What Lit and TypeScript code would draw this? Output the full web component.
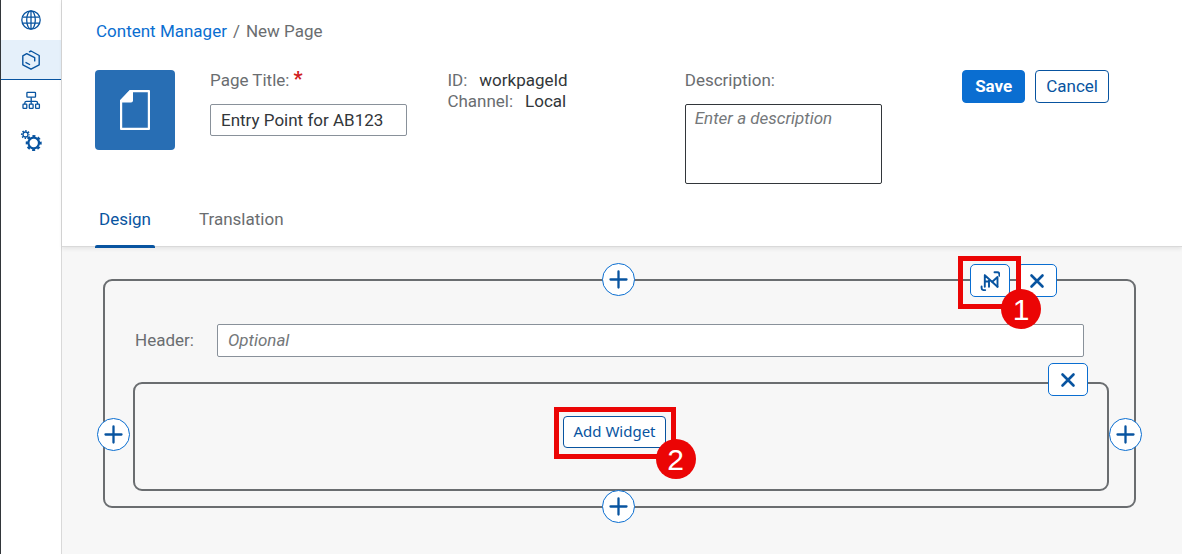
import { LitElement, html, css, svg } from "lit";
import { customElement, state } from "lit/decorators.js";

const globe = svg`<svg width="20" height="20" viewBox="0 0 20 20" fill="none" stroke="currentColor" stroke-width="1.3" aria-hidden="true">
  <circle cx="10" cy="10" r="9.2"/><ellipse cx="10" cy="10" rx="4.3" ry="9.2"/><path d="M10 1v18M2 7.2h16M2 13.2h16"/></svg>`;
const box = svg`<svg width="20" height="20" viewBox="0 0 20 20" fill="none" stroke="currentColor" stroke-width="1.4" stroke-linecap="round" stroke-linejoin="round" aria-hidden="true">
  <path d="M8.4 1.8 10 1l8.200 4.500v9.300L10 19.200l-8.200-4.400V5.800l3.900-2.200 8 4v3.300M5 12.600l3.600 1.900"/></svg>`;
const tree = svg`<svg width="20" height="20" viewBox="0 0 20 20" fill="none" stroke="currentColor" stroke-width="1.3" aria-hidden="true">
  <rect x="5.9" y="2.4" width="8.6" height="4.8" rx=".6"/><path d="M10.2 7.2v7M3.8 14.2V13q0-1.700 1.700-1.700h9.400q1.700 0 1.700 1.700v1.200"/>
  <rect x="2" y="14.200" width="3.8" height="4.2" rx=".6"/><rect x="8.3" y="14.200" width="3.8" height="4.2" rx=".6"/><rect x="14.6" y="14.200" width="3.8" height="4.2" rx=".6"/></svg>`;
const gears = svg`<svg width="22" height="22" viewBox="0 0 22 22" fill="none" stroke="currentColor" aria-hidden="true">
  <circle cx="13.7" cy="14" r="5.3" stroke-width="2.2"/><circle cx="13.7" cy="14" r="6.9" stroke-width="2.2" stroke-dasharray="3 2.419" stroke-dashoffset="1.5"/>
  <circle cx="5.5" cy="5.5" r="2.5" stroke-width="1.3"/><circle cx="5.5" cy="5.5" r="3.7" stroke-width="1.7" stroke-dasharray="1.4 1.506" stroke-dashoffset=".7"/></svg>`;
const doc = svg`<svg width="30" height="40" viewBox="0 0 30 40" aria-hidden="true">
  <path d="M10.5 1H28q1 0 1 1v36q0 1-1 1H2q-1 0-1-1V11z" fill="none" stroke="#fff" stroke-width="2.4"/>
  <path d="M0 10.5 10 0h3v10.5q0 2-2 2H0z" fill="#fff"/></svg>`;
const plus = svg`<svg width="19" height="19" viewBox="0 0 19 19" fill="none" stroke="currentColor" stroke-width="2.3" stroke-linecap="round" aria-hidden="true"><path d="M9.5 1.500v16M1.5 9.500h16"/></svg>`;
const cross = svg`<svg width="16" height="16" viewBox="0 0 16 16" fill="none" stroke="currentColor" stroke-width="2.6" stroke-linecap="round" aria-hidden="true"><path d="m2.5 2.500 11 11M13.5 2.500l-11 11"/></svg>`;
const noHeader = svg`<svg width="20" height="20" viewBox="0 0 20 20" fill="none" stroke="currentColor" stroke-width="1.9" stroke-linecap="round" stroke-linejoin="round" aria-hidden="true">
  <path d="M14.500 1.200h2.700q2.200 0 2.200 2.200v1.400M1.600 15.500v1.400q0 2.200 2.200 2.200h1.400"/><path d="M4.800 4.200v11.600M9 8v7.800M4.800 10.500H9M4.800 4.200l12.700 11.600"/><path d="M17.500 15.800V6l-5.200 4.800" /></svg>`;

@customElement("app-root")
export class AppRoot extends LitElement {
  @state() private tab = "Design";

  static styles = css`
    :host { display: flex; min-height: 100vh; background: #f7f7f7; color: #32363a; font: 17px/21px Roboto, "Liberation Sans", sans-serif; }
    *, *::before { box-sizing: border-box; }
    button, input, textarea { font: inherit; margin: 0; }
    button { cursor: pointer; }
    a { color: #0a6ed1; text-decoration: none; }
    svg { display: block; }
    .side { flex: none; width: 62px; background: #fff; border-left: 1px solid #32363a; border-right: 1px solid #d9d9d9; }
    .nav { display: flex; align-items: center; justify-content: center; height: 40px; color: #0854a0; border-bottom: 1px solid transparent; }
    .nav.on { background: #e5f0fa; border-color: #0854a0; }
    .main { flex: 1; min-width: 0; }
    .head { background: #fff; padding: 21px 73px 0 33px; border-bottom: 1px solid #d9d9d9; box-shadow: 0 2px 4px rgba(0, 0, 0, .08); }
    .crumbs { display: flex; gap: 6px; padding-left: 1px; color: #6a6d70; }
    .info { display: flex; align-items: flex-start; margin-top: 28px; }
    .tile { flex: none; display: grid; place-items: center; width: 80px; height: 80px; border-radius: 4px; background: #286eb4; }
    .fields { flex: 1; display: grid; grid-template-columns: repeat(3, minmax(0, 1fr)); gap: 40px; margin: 0 80px 0 35px; }
    .field { display: flex; flex-direction: column; gap: 13px; }
    label, dt { color: #6a6d70; }
    .req { color: #d02020; font-weight: 700; font-size: 20px; line-height: 16px; padding-left: 4px; }
    .box { width: 100%; height: 32px; padding: 0 10px; border: 1px solid #89919a; border-radius: 2px; background: #fff; color: #32363a; }
    .area { height: 80px; padding: 3px 9px; border-color: #32363a; resize: none; display: block; }
    .box::placeholder { color: #74777a; font-style: italic; opacity: 1; }
    dl { margin: 0; }
    .pair { display: flex; gap: 12px; }
    dd { margin: 0; }
    .actions { display: flex; gap: 10px; }
    .btn { height: 33px; padding: 0 9px; border: 1px solid #0854a0; border-radius: 4px; background: #fff; color: #0854a0; white-space: nowrap; }
    .actions .btn { padding: 0 10px; }
    .actions .save { padding: 0 12px; background: #0a6ed1; border-color: #0a6ed1; color: #fff; font-weight: 700; }
    .tabs { display: flex; gap: 40px; margin-top: 25px; }
    .tab { height: 37px; padding: 0 4px 16px; border: 0; background: none; color: #6a6d70; position: relative; }
    .tab.on { color: #0854a0; }
    .tab.on::before { content: ""; position: absolute; left: 0; right: 0; bottom: -2px; height: 3px; border-radius: 2px 2px 0 0; background: #0854a0; }
    .canvas { padding: 32px 46px 46px 41px; }
    .section { position: relative; padding: 43px 25px 15px 28px; border: 2px solid #6a6d70; border-radius: 9px; }
    .row { display: flex; align-items: center; gap: 23px; padding: 0 25px 0 2px; }
    .row .box { flex: 1; min-width: 0; height: 33px; padding-bottom: 2px; }
    .cell { position: relative; display: flex; justify-content: center; align-items: center; margin-top: 25px; padding: 32px 13px 41px 0; border: 2px solid #6a6d70; border-radius: 9px; }
    .widget { height: 32px; padding: 0 9px 2px; font-size: 15px; font-family: "Noto Sans", "Open Sans", sans-serif; }
    .spot { position: relative; }
    .tools { position: absolute; display: flex; gap: 7px; right: 77px; top: -17px; }
    .cell .tools { right: 19px; top: -21px; }
    .icon { display: grid; place-items: center; width: 40px; height: 33px; padding: 0; border: 1px solid #0a6ed1; border-radius: 5px; background: #fff; color: #0854a0; }
    .add { position: absolute; width: 33px; height: 33px; border-radius: 50%; }
    .top { left: calc(50% - 18px); top: -18px; }
    .bottom { left: calc(50% - 18px); bottom: -17px; }
    .left { left: -8px; top: 137px; }
    .right { right: -8px; top: 137px; }
    .mark { position: absolute; inset: -9px -10px -11px -9px; border: 5px solid #eb0505; pointer-events: none; z-index: 1; }
    .tools .mark { inset: -8px -11px -12px -12px; }
    .num { position: absolute; right: -25px; bottom: -25px; width: 40px; height: 40px; border-radius: 50%; background: #eb0505; color: #fff; font: 30px/41px "Liberation Sans", Arial, sans-serif; text-align: center; }
  `;

  private mark(n: number) {
    return html`<span class="mark"><span class="num">${n}</span></span>`;
  }

  render() {
    const nav = [["Sites", globe], ["Content", box], ["Channels", tree], ["Settings", gears]] as const;
    return html`
      <nav class="side">
        ${nav.map(([name, icon]) => html`<a class="nav ${name === "Content" ? "on" : ""}" href="#" aria-label=${name}>${icon}</a>`)}
      </nav>
      <main class="main">
        <header class="head">
          <nav class="crumbs"><a href="#">Content Manager</a><span>/</span><span>New Page</span></nav>
          <div class="info">
            <div class="tile">${doc}</div>
            <div class="fields">
              <div class="field">
                <label for="title">Page Title:<span class="req">*</span></label>
                <input class="box" id="title" .value=${"Entry Point for AB123"} required />
              </div>
              <dl>
                <div class="pair"><dt>ID:</dt><dd>workpageId</dd></div>
                <div class="pair"><dt>Channel:</dt><dd>Local</dd></div>
              </dl>
              <div class="field">
                <label for="desc">Description:</label>
                <textarea class="box area" id="desc" placeholder="Enter a description"></textarea>
              </div>
            </div>
            <div class="actions">
              <button class="btn save">Save</button>
              <button class="btn">Cancel</button>
            </div>
          </div>
          <div class="tabs" role="tablist">
            ${["Design", "Translation"].map((t) => html`<button class="tab ${t === this.tab ? "on" : ""}" role="tab"
              aria-selected=${t === this.tab} @click=${() => (this.tab = t)}>${t}</button>`)}
          </div>
        </header>
        <div class="canvas">
          <section class="section">
            <div class="tools">
              <div class="spot"><button class="icon" aria-label="Hide header">${noHeader}</button>${this.mark(1)}</div>
              <button class="icon" aria-label="Remove section">${cross}</button>
            </div>
            <div class="row">
              <label for="header">Header:</label>
              <input class="box" id="header" placeholder="Optional" />
            </div>
            <div class="cell">
              <div class="tools"><button class="icon" aria-label="Remove cell">${cross}</button></div>
              <div class="spot"><button class="btn widget">Add Widget</button>${this.mark(2)}</div>
            </div>
            ${["top", "bottom", "left", "right"].map((p) => html`<button class="icon add ${p}" aria-label="Add ${p}">${plus}</button>`)}
          </section>
        </div>
      </main>`;
  }
}
